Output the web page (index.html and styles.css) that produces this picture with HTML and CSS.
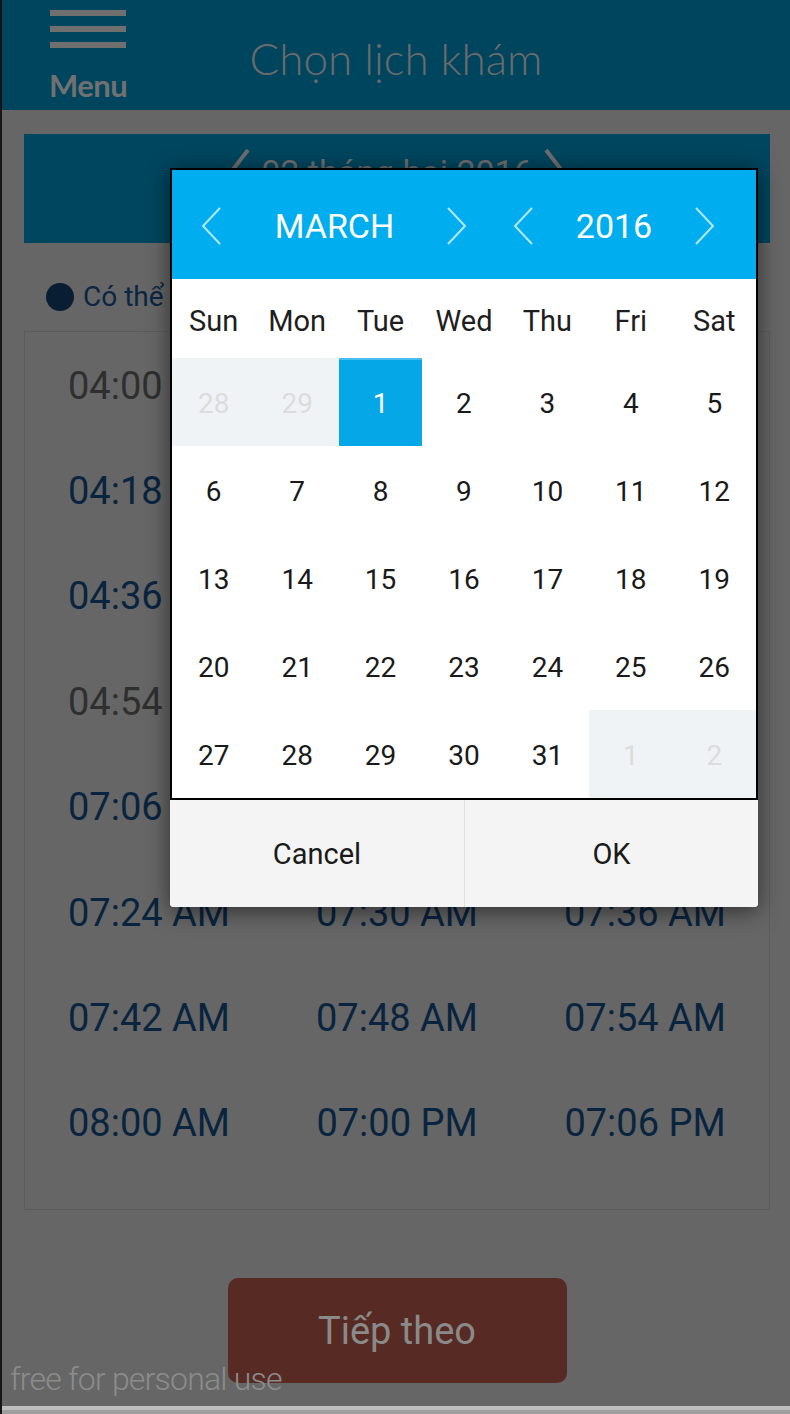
FILE: index.html
```html
<!DOCTYPE html>
<html lang="vi">
<head>
<meta charset="utf-8">
<title>Chọn lịch khám</title>
<link rel="stylesheet" href="styles.css">
</head>
<body>
<div class="app">
  <header class="topbar">
    <div class="menu">
      <div class="bars"><span></span><span></span><span></span></div>
      <div class="menu-label">Menu</div>
    </div>
    <h1 class="title">Chọn lịch khám</h1>
    <div class="spacer"></div>
  </header>

  <main class="content">
    <div class="datebar">
      <svg class="dchev" width="24" height="48" viewBox="0 0 24 48"><path d="M21 2 L4 24 L21 46"/></svg>
      <span class="datebar-text">02 tháng hai 2016</span>
      <svg class="dchev" width="24" height="48" viewBox="0 0 24 48"><path d="M3 2 L20 24 L3 46"/></svg>
    </div>

    <div class="legend"><span class="dot"></span><span class="legend-text">Có thể đặt lịch</span></div>

    <div class="slots">
      <div class="slot booked">04:00 AM</div><div class="slot">04:06 AM</div><div class="slot">04:12 AM</div>
      <div class="slot">04:18 AM</div><div class="slot">04:24 AM</div><div class="slot">04:30 AM</div>
      <div class="slot">04:36 AM</div><div class="slot">04:42 AM</div><div class="slot">04:48 AM</div>
      <div class="slot booked">04:54 AM</div><div class="slot">05:00 AM</div><div class="slot">07:00 AM</div>
      <div class="slot">07:06 AM</div><div class="slot">07:12 AM</div><div class="slot">07:18 AM</div>
      <div class="slot">07:24 AM</div><div class="slot">07:30 AM</div><div class="slot">07:36 AM</div>
      <div class="slot">07:42 AM</div><div class="slot">07:48 AM</div><div class="slot">07:54 AM</div>
      <div class="slot">08:00 AM</div><div class="slot">07:00 PM</div><div class="slot">07:06 PM</div>
    </div>

    <div class="actions"><button class="next">Tiếp theo</button></div>
  </main>

  <div class="bottom-strip"></div>

  <div class="watermark">free for personal use</div>

  <div class="dialog">
    <div class="calendar">
      <div class="cal-head">
        <svg class="chev" width="21" height="38" viewBox="0 0 21 38"><path d="M19 1 L2 19 L19 37"/></svg>
        <div class="cal-label">MARCH</div>
        <svg class="chev" width="20" height="38" viewBox="0 0 20 38"><path d="M1 1 L18 19 L1 37"/></svg>
        <div></div>
        <svg class="chev" width="20" height="38" viewBox="0 0 20 38"><path d="M19 1 L2 19 L19 37"/></svg>
        <div class="cal-label">2016</div>
        <svg class="chev" width="20" height="38" viewBox="0 0 20 38"><path d="M1 1 L18 19 L1 37"/></svg>
      </div>
      <div class="weekdays">
        <span>Sun</span><span>Mon</span><span>Tue</span><span>Wed</span><span>Thu</span><span>Fri</span><span>Sat</span>
      </div>
      <div class="days">
        <span class="day other">28</span><span class="day other">29</span><span class="day selected">1</span><span class="day">2</span><span class="day">3</span><span class="day">4</span><span class="day">5</span>
        <span class="day">6</span><span class="day">7</span><span class="day">8</span><span class="day">9</span><span class="day">10</span><span class="day">11</span><span class="day">12</span>
        <span class="day">13</span><span class="day">14</span><span class="day">15</span><span class="day">16</span><span class="day">17</span><span class="day">18</span><span class="day">19</span>
        <span class="day">20</span><span class="day">21</span><span class="day">22</span><span class="day">23</span><span class="day">24</span><span class="day">25</span><span class="day">26</span>
        <span class="day">27</span><span class="day">28</span><span class="day">29</span><span class="day">30</span><span class="day">31</span><span class="day other">1</span><span class="day other">2</span>
      </div>
    </div>
    <div class="dialog-buttons">
      <button class="dbtn">Cancel</button>
      <button class="dbtn">OK</button>
    </div>
  </div>
</div>
</body>
</html>
```

FILE: styles.css
```css
* { box-sizing: border-box; }

html, body {
  margin: 0;
  padding: 0;
  background: #666666;
}

.app {
  position: relative;
  width: 790px;
  height: 1414px;
  overflow: hidden;
  background: #666666;
  border-left: 2px solid #151515;
  display: flex;
  flex-direction: column;
  font-family: Roboto, "Noto Sans", sans-serif;
}

/* ---------- top bar ---------- */
.topbar {
  height: 110px;
  flex: none;
  background: #00455e;
  display: grid;
  grid-template-columns: 1fr auto 1fr;
}

.menu {
  padding: 10px 0 0 47px;
  display: flex;
  flex-direction: column;
  align-items: flex-start;
}

.bars {
  display: flex;
  flex-direction: column;
  gap: 10px;
  padding-left: 1px;
}

.bars span {
  display: block;
  width: 76px;
  height: 6px;
  background: #707070;
}

.menu-label {
  margin-top: 22px;
  font-family: Lato, "Open Sans", sans-serif;
  font-weight: 700;
  font-size: 31px;
  line-height: 31px;
  letter-spacing: -0.5px;
  color: #717171;
}

.title {
  margin: 36px 0 0 0;
  font-family: Lato, "Open Sans", sans-serif;
  font-weight: 300;
  font-size: 44px;
  line-height: 44px;
  color: #6b6b6b;
  white-space: nowrap;
}

/* ---------- content ---------- */
.content {
  display: flex;
  flex-direction: column;
  margin: 0 20px 0 22px;
}

.datebar {
  margin-top: 24px;
  height: 109px;
  background: #00465f;
  display: flex;
  justify-content: center;
  align-items: flex-start;
  gap: 10px;
  padding-top: 14px;
}

.dchev { flex: none; }
.dchev path { fill: none; stroke: #6e6e6e; stroke-width: 4; }

.datebar-text {
  font-size: 34px;
  line-height: 40px;
  color: #6e6e6e;
  padding-top: 4px;
}

.legend {
  margin: 40px 0 20px 0;
  height: 28px;
  display: flex;
  align-items: center;
  gap: 9px;
  padding-left: 22px;
}

.dot {
  width: 28px;
  height: 28px;
  border-radius: 50%;
  background: #0a1e33;
  flex: none;
}

.legend-text {
  font-size: 28px;
  line-height: 28px;
  color: #0b2642;
  white-space: nowrap;
}

.slots {
  border: 1px solid #5c5c5c;
  display: grid;
  grid-template-columns: repeat(3, 1fr);
  grid-auto-rows: 105.4px;
  padding-top: 1px;
  padding-bottom: 33px;
}

.slot {
  display: flex;
  align-items: center;
  justify-content: center;
  font-size: 38px;
  line-height: 44px;
  color: #09243f;
  white-space: nowrap;
}

.slot.booked { color: #2f2f2f; }

.actions {
  display: flex;
  justify-content: center;
  margin-top: 68px;
}

.next {
  width: 339px;
  height: 105px;
  border: none;
  border-radius: 10px;
  background: #572b23;
  color: #8a8a8a;
  font-family: Roboto, sans-serif;
  font-size: 38px;
  padding: 0;
}

.bottom-strip {
  margin-top: auto;
  margin-left: -2px;
  height: 8px;
  background: linear-gradient(#bdbdbd 0 4px, #9e9e9e 4px);
}

.watermark {
  position: absolute;
  left: 8px;
  top: 1363px;
  font-size: 32px;
  line-height: 32px;
  font-weight: 300;
  letter-spacing: -0.8px;
  color: #8c8c8c;
  white-space: nowrap;
}

/* ---------- date picker dialog ---------- */
.dialog {
  position: absolute;
  left: 168px;
  top: 168px;
  width: 588px;
  box-shadow: 0 4px 22px rgba(0, 0, 0, 0.55);
  border-radius: 0 0 4px 4px;
}

.calendar {
  border: 2px solid #000;
  background: #fff;
}

.cal-head {
  height: 109px;
  background: #00aeef;
  display: grid;
  grid-template-columns: 21px 225px 20px 46px 20px 162px 20px;
  align-items: center;
  padding-left: 29px;
  padding-top: 2px;
}

.chev path { fill: none; stroke: #b4e7fb; stroke-width: 2; }

.cal-label {
  text-align: center;
  color: #fff;
  font-size: 34px;
  line-height: 40px;
}

.weekdays {
  height: 79px;
  display: grid;
  grid-template-columns: repeat(7, 1fr);
  align-items: center;
  text-align: center;
  font-size: 29px;
  color: #1e1e1e;
  padding-top: 5px;
}

.days {
  display: grid;
  grid-template-columns: repeat(7, 1fr);
  grid-auto-rows: 88px;
}

.day {
  display: flex;
  align-items: center;
  justify-content: center;
  font-size: 28px;
  color: #1a1a1a;
  padding-top: 2px;
}

.day.other {
  background: #f0f3f6;
  color: #dcdcdc;
}

.day.selected {
  background: #05a7e7;
  box-shadow: inset 0 2px 0 #45bdf0;
  color: #fff;
}

.dialog-buttons {
  height: 107px;
  display: grid;
  grid-template-columns: 1fr 1fr;
  background: #f4f4f4;
  border-radius: 0 0 4px 4px;
  overflow: hidden;
}

.dbtn {
  border: none;
  background: #f4f4f4;
  font-family: Roboto, sans-serif;
  font-size: 29px;
  color: #1a1a1a;
  padding: 0;
}

.dbtn + .dbtn { border-left: 1px solid #dedede; }
```
